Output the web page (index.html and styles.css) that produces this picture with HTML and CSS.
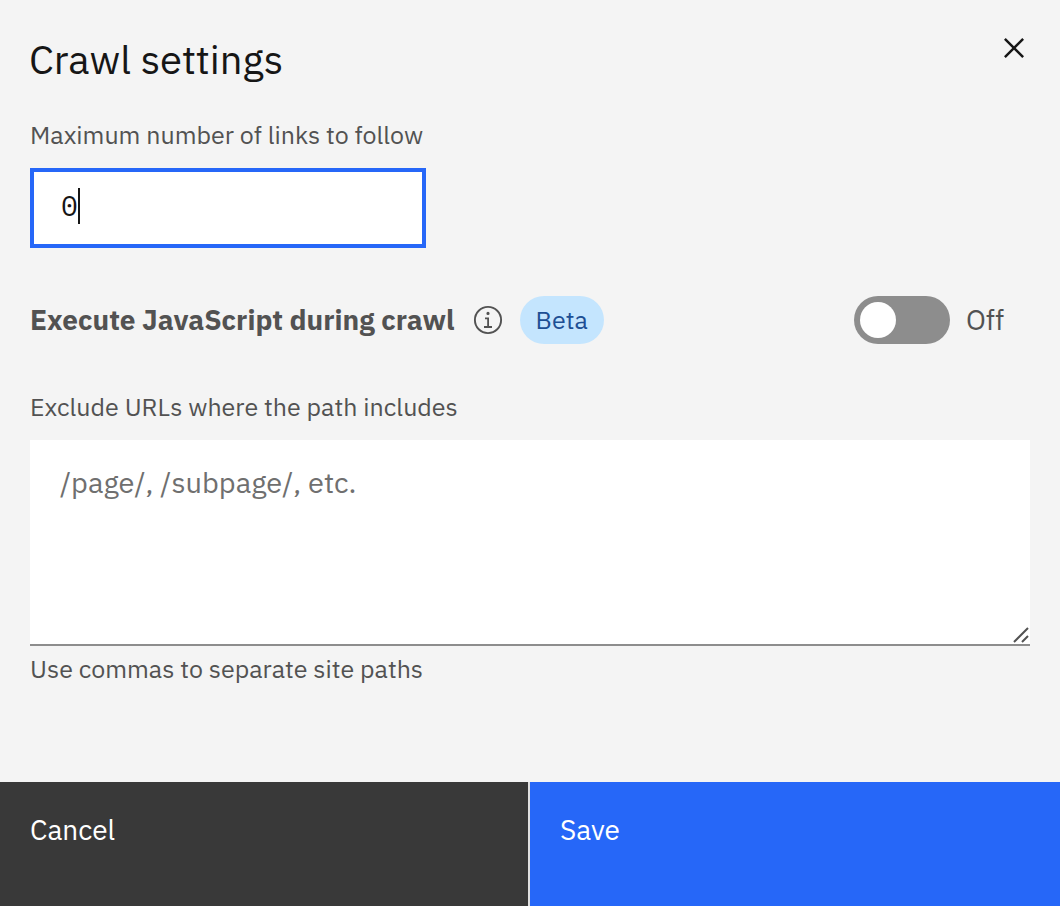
FILE: index.html
```html
<!DOCTYPE html>
<html lang="en">
<head>
<meta charset="utf-8">
<meta name="viewport" content="width=device-width, initial-scale=1">
<title>Crawl settings</title>
<link rel="stylesheet" href="styles.css">
</head>
<body>
<form class="dialog">
  <header class="header">
    <h1 class="title">Crawl settings</h1>
    <button class="close" type="button" aria-label="Close">
      <svg width="40" height="40" viewBox="0 0 32 32" fill="currentColor" aria-hidden="true"><path d="M24 9.4 22.6 8 16 14.6 9.4 8 8 9.4 14.6 16 8 22.6 9.4 24 16 17.4 22.6 24 24 22.6 17.4 16z"/></svg>
    </button>
  </header>
  <div class="content">
    <div class="field">
      <label class="label" for="links">Maximum number of links to follow</label>
      <div class="number-box">
        <input class="number" id="links" type="text" inputmode="numeric" value="0">
        <span class="caret" aria-hidden="true"></span>
      </div>
    </div>
    <div class="script-row">
      <h2 class="script-title" id="script-title">Execute JavaScript during crawl</h2>
      <button class="info" type="button" aria-label="More information">
        <svg width="32" height="32" viewBox="0 0 32 32" fill="currentColor" aria-hidden="true"><path d="M17 22V13.500H13v1.700h2.200V22H12v2h8V22zM16 7.800a1.600 1.600 0 1 0 1.600 1.600A1.600 1.600 0 0 0 16 7.800z"/><circle cx="16" cy="16" r="13.100" fill="none" stroke="currentColor" stroke-width="1.900"/></svg>
      </button>
      <span class="tag">Beta</span>
      <label class="toggle">
        <input class="switch" type="checkbox" role="switch" aria-labelledby="script-title">
        <span class="state">Off</span>
      </label>
    </div>
    <div class="field">
      <label class="label" for="paths">Exclude URLs where the path includes</label>
      <div class="paths-box">
        <textarea class="paths" id="paths" placeholder="/page/, /subpage/, etc." aria-describedby="help"></textarea>
        <svg class="grip" width="18" height="18" viewBox="0 0 18 18" fill="none" stroke="#525252" stroke-width="2" aria-hidden="true"><path d="M2 16 16 2M10 16l6-6"/></svg>
      </div>
      <p class="help" id="help">Use commas to separate site paths</p>
    </div>
  </div>
  <footer class="footer">
    <button class="action cancel" type="button">Cancel</button>
    <button class="action save" type="submit">Save</button>
  </footer>
</form>
</body>
</html>
```
FILE: styles.css
```css
* { box-sizing: border-box; }
body {
  margin: 0;
  background: #f4f4f4;
  color: #161616;
  font-family: "IBM Plex Sans", "Noto Sans", sans-serif;
}
.dialog { display: flex; flex-direction: column; min-height: 100vh; }
.header {
  display: flex;
  justify-content: space-between;
  align-items: flex-start;
  padding: 28px 26px 0 29px;
}
.title { margin: 0; font-size: 40px; line-height: 62px; font-weight: 400; }
.close, .info { display: flex; padding: 0; border: 0; background: none; color: #161616; }
.info { margin-left: 17px; color: #525252; }
.content { flex: 1; padding: 29px 30px 0; }
.field { display: flex; flex-direction: column; align-items: flex-start; }
.label { margin-bottom: 17px; color: #525252; font-size: 25px; line-height: 32px; }
.number-box, .paths-box { position: relative; }
.number-box { width: 396px; max-width: 100%; }
.paths-box { width: 100%; }
.number {
  display: block;
  width: 100%;
  height: 80px;
  padding: 0 27px 6px;
  border: 4px solid #2667f8;
  border-radius: 0;
  outline: 0;
  background: #fff;
  color: #161616;
  caret-color: transparent;
  font: 28px/36px "IBM Plex Mono", "IBM Plex Sans", "Liberation Mono", monospace;
}
.caret {
  position: absolute;
  top: 20px;
  left: 48px;
  width: 2px;
  height: 36px;
  background: #161616;
  pointer-events: none;
}
.script-row { display: flex; align-items: center; margin: 48px 0 47px; }
.script-title { margin: 0; color: #525252; font-size: 28px; line-height: 36px; font-weight: 700; }
.tag {
  margin-left: 16px;
  padding: 0 16px;
  border-radius: 24px;
  background: #c4e5fe;
  color: #1d4f94;
  font-size: 25px;
  line-height: 48px;
}
.toggle { display: flex; align-items: center; margin-left: auto; margin-right: 26px; }
.switch {
  appearance: none;
  display: flex;
  align-items: center;
  width: 96px;
  height: 48px;
  margin: 0 16px 0 0;
  padding: 6px;
  border-radius: 24px;
  background: #8d8d8d;
}
.switch::before { content: ""; width: 36px; height: 36px; border-radius: 50%; background: #fff; }
.switch:checked { justify-content: flex-end; background: #24a148; }
.state { color: #525252; font-size: 28px; line-height: 36px; }
.paths {
  display: block;
  width: 100%;
  height: 206px;
  padding: 24px 30px;
  border: 0;
  border-bottom: 2px solid #8d8d8d;
  border-radius: 0;
  outline: 0;
  background: #fff;
  color: #161616;
  font: 29px/36px "IBM Plex Sans", "Noto Sans", sans-serif;
  resize: vertical;
}
.paths::-webkit-resizer { background: transparent; }
.paths::placeholder { color: #6f6f6f; opacity: 1; }
.grip { position: absolute; right: 0; bottom: 2px; pointer-events: none; }
.help { margin: 7px 0 0; color: #525252; font-size: 25px; line-height: 32px; }
.footer { display: grid; grid-template-columns: 1fr 1fr; }
.action {
  height: 124px;
  padding: 30px 30px 58px;
  border: 0;
  color: #fff;
  font: 28px/36px "IBM Plex Sans", "Noto Sans", sans-serif;
  text-align: left;
}
.cancel { border-right: 2px solid #e0e0e0; background: #393939; }
.save { background: #2667f8; }
```
